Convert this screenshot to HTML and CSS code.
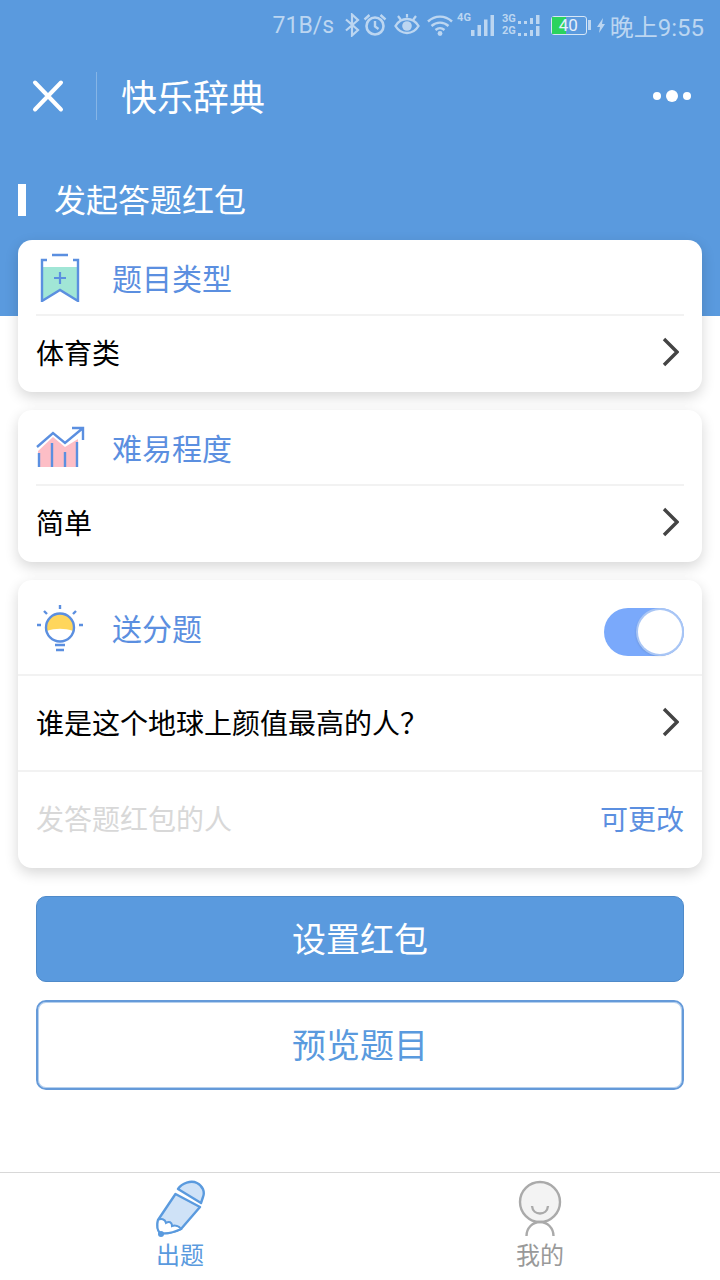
FILE: index.html
```html
<!DOCTYPE html>
<html lang="zh">
<head>
    <meta charset="UTF-8">
    <meta name="viewport" content="width=device-width, initial-scale=1.0">
    <title>快乐辞典</title>
    <link rel="stylesheet" href="styles.css">
</head>
<body>

    <div class="header">
        <div class="status-bar">
            <span class="speed">71B/s</span>
            <svg class="st-bt" width="16" height="24" viewBox="0 0 16 24"><path d="M2 6.5l12 10.5-6 5.5V1.5L14 7 2 17.5" fill="none" stroke="currentColor" stroke-width="2.2"/></svg>
            <svg class="st-alarm" width="24" height="24" viewBox="0 0 24 24"><circle cx="12" cy="13" r="8.5" fill="none" stroke="currentColor" stroke-width="2.6"/><path d="M12 8v5.5l3.5 2.5M1.5 6.5l5-4.500M22.5 6.5l-5-4.500" fill="none" stroke="currentColor" stroke-width="2.4"/></svg>
            <svg class="st-eye" width="26" height="24" viewBox="0 0 26 24"><path d="M1.5 13c3-5 7-7 11.5-7s8.5 2 11.5 7c-3 5-7 7-11.5 7s-8.5-2-11.5-7z" fill="none" stroke="currentColor" stroke-width="2.4"/><circle cx="13" cy="13" r="4.8" fill="currentColor"/><path d="M4 3l3 4M22 3l-3 4M13 1v3.5" stroke="currentColor" stroke-width="2.2"/></svg>
            <svg class="st-wifi" width="26" height="24" viewBox="0 0 26 24"><path d="M1 8.5c7-6.5 17-6.5 24 0M4.5 13c5-4.500 12-4.500 17 0M8.5 17c3-2.500 6-2.500 9 0" fill="none" stroke="currentColor" stroke-width="2.4"/><circle cx="13" cy="20.5" r="2.4" fill="currentColor"/></svg>
            <span class="signal">
                <small class="net">4G</small>
                <svg width="23" height="24" viewBox="0 0 23 24"><path d="M0 17h3.5v6H0zM6.5 12H10v11H6.5zM13 6.5h3.5V23H13zM19.5 2H23v21h-3.5z" fill="currentColor"/></svg>
            </span>
            <span class="signal signal-double">
                <small class="net net-double">3G<br>2G</small>
                <svg width="25" height="24" viewBox="0 0 25 24"><path d="M2 8h3v3H2zM8 8h3v3H8zM14 5h3v6h-3zM20 2h3.5v9H20zM2 20h3v3H2zM8 20h3v3H8zM14 17h3v6h-3zM20 13h3.5v10H20z" fill="currentColor"/></svg>
            </span>
            <span class="battery"><span class="battery-fill"></span><span class="battery-num">40</span></span>
            <span class="battery-tip"></span>
            <svg class="st-bolt" width="8" height="24" viewBox="0 0 8 24"><path d="M6 5L0 14h3l-1 6 6-9H5z" fill="currentColor"/></svg>
            <span class="clock">晚上9:55</span>
        </div>

        <div class="nav">
            <button class="close-btn">
                <svg width="34" height="34" viewBox="0 0 34 34"><path d="M4 3.5l26 27M30 3.5l-26 27" stroke="#fff" stroke-width="4" fill="none" stroke-linecap="round"/></svg>
            </button>
            <span class="nav-sep"></span>
            <span class="nav-title">快乐辞典</span>
            <span class="more"><i></i><i class="big"></i><i></i></span>
        </div>

        <h1 class="section-title">发起答题红包</h1>
    </div>

    <div class="content">
        <div class="card">
            <div class="card-head">
                <svg class="head-icon" width="50" height="50" viewBox="0 0 50 50">
                    <path d="M6 15h36v34L24 38 6 49z" fill="#a1e6d6"/>
                    <path d="M11 8H6v41l18-11 18 11V8h-5M16 3h16" fill="none" stroke="#5b8fe0" stroke-width="2.4"/>
                    <path d="M24 20v12M18 26h12" stroke="#5b8fe0" stroke-width="2.2"/>
                </svg>
                <span class="head-label">题目类型</span>
            </div>
            <div class="row row-sm">
                <span class="row-text">体育类</span>
                <svg class="arrow" width="18" height="30" viewBox="0 0 18 30"><path d="M3 2l13 13L3 28" fill="none" stroke="#444" stroke-width="3.4"/></svg>
            </div>
        </div>

        <div class="card">
            <div class="card-head">
                <svg class="head-icon" width="50" height="50" viewBox="0 0 50 50">
                    <path d="M2 29l15-14 12 10 13-8v28H2z" fill="#fdbec6"/>
                    <path d="M1 25l16-14 12 10L47 6M36 6h11v12" fill="none" stroke="#5b8fe0" stroke-width="2.4"/>
                    <path d="M3 31v14M16 21v24M29 30v15M41 20v25" stroke="#5b8fe0" stroke-width="2.4"/>
                </svg>
                <span class="head-label">难易程度</span>
            </div>
            <div class="row row-sm">
                <span class="row-text">简单</span>
                <svg class="arrow" width="18" height="30" viewBox="0 0 18 30"><path d="M3 2l13 13L3 28" fill="none" stroke="#444" stroke-width="3.4"/></svg>
            </div>
        </div>

        <div class="card">
            <div class="card-head card-head-tall">
                <svg class="head-icon" width="50" height="50" viewBox="0 0 50 50">
                    <path d="M10.5 29a14 14 0 1 1 27 0c-9-3-18-3-27 0z" fill="#ffd65c"/>
                    <circle cx="24" cy="25.5" r="14" fill="none" stroke="#5b8fe0" stroke-width="2.4"/>
                    <path d="M24 3v4M8 9l3 3M40 9l-3 3M1 23h4M43 23h4M19 43h10M20 48h8" stroke="#5b8fe0" stroke-width="2.4"/>
                </svg>
                <span class="head-label">送分题</span>
                <span class="switch"><span class="knob"></span></span>
            </div>
            <div class="row row-line">
                <span class="row-text">谁是这个地球上颜值最高的人？</span>
                <svg class="arrow" width="18" height="30" viewBox="0 0 18 30"><path d="M3 2l13 13L3 28" fill="none" stroke="#444" stroke-width="3.4"/></svg>
            </div>
            <div class="row">
                <span class="row-text placeholder">发答题红包的人</span>
                <span class="editable">可更改</span>
            </div>
        </div>

        <button class="btn btn-main">设置红包</button>
        <button class="btn btn-outline">预览题目</button>
    </div>

    <div class="tabbar">
        <div class="tab tab-on">
            <svg width="50" height="58" viewBox="0 0 50 58">
                <path d="M23 9C27 3 36 0 42 3s8 9 6 14l-2 6z" fill="#cfe2f7" stroke="#5a9ade" stroke-width="2.4" stroke-linejoin="round"/>
                <path d="M20.5 14L45 27 26 49C19 52 10 54 5 53 2 50 2 45 3 40z" fill="#cfe2f7" stroke="#5a9ade" stroke-width="2.4" stroke-linejoin="round"/>
                <path d="M3 40c3-2 7-1 8 3 3-2 6-1 6 3 3-1 7 0 9 3-6 3-15 5-21 4-3-3-3-8-2-13z" fill="#fff" stroke="#5a9ade" stroke-width="2"/>
                <circle cx="6" cy="54" r="3" fill="#5a9ade"/>
            </svg>
            <span>出题</span>
        </div>
        <div class="tab">
            <svg width="46" height="58" viewBox="0 0 46 58">
                <circle cx="23" cy="22" r="20" fill="#f3f3f3" stroke="#aaa" stroke-width="2.4"/>
                <path d="M15 26c1 10 15 10 16 0" fill="none" stroke="#aaa" stroke-width="2.4"/>
                <path d="M9.5 56c0-8 6-14 13.5-14s13.5 6 13.5 14" fill="none" stroke="#aaa" stroke-width="2.4"/>
            </svg>
            <span>我的</span>
        </div>
    </div>

</body>
</html>
```

FILE: styles.css
```css
* {
    box-sizing: border-box;
}
body {
    font-family: "Noto Sans CJK SC", "Noto Sans", sans-serif;
    background-color: #fff;
    margin: 0;
    padding: 0;
    width: 720px;
    height: 1280px;
    display: flex;
    flex-direction: column;
    overflow: hidden;
}
.header {
    background-color: #5a9ade;
    height: 316px;
    margin-bottom: -76px;
    flex-shrink: 0;
}
/* Status bar */
.status-bar {
    height: 50px;
    display: flex;
    align-items: center;
    justify-content: flex-end;
    padding-right: 16px;
    color: #bcd6f1;
    font-family: Roboto, "Noto Sans CJK SC", sans-serif;
    font-size: 23px;
}
.st-bt {
    margin-left: 10px;
}
.st-alarm {
    margin-left: 3px;
}
.st-eye {
    margin-left: 7px;
}
.st-wifi {
    margin-left: 7px;
}
.st-bolt {
    margin-left: 6px;
}
.signal {
    display: flex;
    align-items: flex-end;
    margin-left: 4px;
    height: 24px;
}
.signal-double {
    margin-left: 8px;
}
.net {
    font-size: 11px;
    font-weight: 700;
    line-height: 10px;
    align-self: flex-start;
}
.net-double {
    line-height: 12px;
}
.battery {
    position: relative;
    width: 36px;
    height: 19px;
    margin-left: 10px;
    border: 1px solid #d6e6f6;
    border-radius: 3px;
    display: block;
}
.battery-fill {
    display: block;
    width: 14px;
    height: 17px;
    background-color: #2bd35e;
}
.battery-num {
    position: absolute;
    top: 0;
    left: 7px;
    font-size: 17px;
    line-height: 17px;
    color: #e6f0fa;
}
.battery-tip {
    width: 3px;
    height: 10px;
    margin-left: 1px;
    background-color: #bcd6f1;
}
.clock {
    margin-left: 5px;
    font-size: 24px;
}
/* Nav bar */
.nav {
    height: 92px;
    display: flex;
    align-items: center;
}
.close-btn {
    background: none;
    border: none;
    padding: 0;
    margin-left: 31px;
    width: 34px;
    height: 34px;
}
.nav-sep {
    width: 1px;
    height: 48px;
    margin-left: 31px;
    background-color: #86b5e6;
}
.nav-title {
    margin-left: 24px;
    padding-bottom: 2px;
    font-size: 36px;
    color: #fff;
    flex: 1;
}
.more {
    display: flex;
    align-items: center;
    gap: 5px;
    margin-right: 29px;
}
.more i {
    width: 8px;
    height: 8px;
    border-radius: 50%;
    background-color: #fff;
}
.more i.big {
    width: 12px;
    height: 12px;
}
.section-title {
    margin: 42px 0 0 18px;
    padding-left: 28px;
    border-left: 8px solid #fff;
    height: 32px;
    line-height: 28px;
    font-size: 32px;
    font-weight: 400;
    color: #fff;
}
.content {
    flex: 1;
    position: relative;
    padding: 0 18px;
}
/* Cards */
.card {
    background-color: #fff;
    border-radius: 14px;
    box-shadow: 0 5px 14px rgba(0, 0, 0, 0.16);
    margin-bottom: 18px;
}
.card-head {
    height: 76px;
    margin: 0 18px;
    border-bottom: 2px solid #f2f2f2;
    display: flex;
    align-items: center;
    position: relative;
}
.head-icon {
    flex-shrink: 0;
}
.head-label {
    margin-left: 26px;
    font-size: 30px;
    color: #5b8fe0;
}
.card-head-tall {
    height: 96px;
    margin: 0;
    padding: 0 18px;
}
.switch {
    margin-left: auto;
    margin-top: 10px;
    width: 80px;
    height: 48px;
    border-radius: 24px;
    background-color: #7aa9fb;
    position: relative;
}
.knob {
    position: absolute;
    right: 2px;
    top: 2px;
    width: 44px;
    height: 44px;
    border-radius: 50%;
    background-color: #fff;
    box-shadow: 0 0 0 2px #a9c6f5, -1px 1px 3px rgba(0, 0, 0, 0.3);
}
.row {
    height: 96px;
    padding: 0 18px 4px;
    display: flex;
    align-items: center;
    justify-content: space-between;
}
.row-sm {
    height: 76px;
}
.row-line {
    padding-bottom: 2px;
    border-bottom: 2px solid #f2f2f2;
}
.row-text {
    font-size: 28px;
    color: #000;
}
.placeholder {
    color: #d8d8d8;
}
.arrow {
    margin-right: 5px;
}
.editable {
    font-size: 28px;
    color: #5b8fe0;
}
/* Buttons */
.btn {
    display: block;
    width: 648px;
    margin: 0 18px;
    padding: 0 0 4px;
    border-radius: 10px;
    font-family: inherit;
    font-size: 34px;
}
.btn-main {
    height: 86px;
    margin-top: 28px;
    background-color: #5a9ade;
    border: 1px solid #4f8ac9;
    color: #fff;
}
.btn-outline {
    height: 90px;
    margin-top: 18px;
    background-color: #fff;
    border: 2px solid #659ad9;
    box-shadow: inset 0 0 0 1px #b5d0ee;
    color: #5a9ade;
}
/* Tab bar */
.tabbar {
    height: 108px;
    flex-shrink: 0;
    border-top: 1px solid #d8d8d8;
    display: flex;
    background-color: #fff;
}
.tab {
    flex: 1;
    display: flex;
    flex-direction: column;
    align-items: center;
    padding-top: 7px;
    color: #999;
    font-size: 24px;
    line-height: 24px;
}
.tab svg {
    margin-bottom: 4px;
}
.tab-on {
    color: #5a9ade;
}
```
